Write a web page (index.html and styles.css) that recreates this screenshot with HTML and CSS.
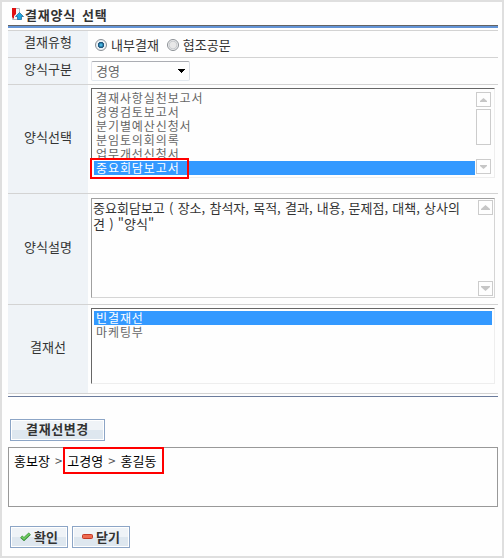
FILE: index.html
```html
<!DOCTYPE html>
<html lang="ko">
<head>
    <meta charset="utf-8">
    <title>결재양식 선택</title>
    <link rel="stylesheet" href="styles.css">
</head>
<body>
    <div class="popup">
        <h1 class="title">
            <svg class="title-icon" width="13" height="13" viewBox="0 0 13 13">
                <path d="M1.5 .5h7v11h-7z" fill="#f4f5f7" stroke="#b4b8be" stroke-width="1"/>
                <path d="M1 0h4v6L3 8v3L1 9z" fill="#e01010"/>
                <path d="M8.5 4.5l4 4h-2v3h-4v-3h-2z" fill="#1fa6dc" stroke="#12639a" stroke-width=".7"/>
            </svg>
            <span class="title-text">결재양식 선택</span>
        </h1>

        <div class="form">
            <div class="row row-type">
                <div class="label">결재유형</div>
                <div class="field radios">
                    <span class="radio checked"></span><span class="radio-text first">내부결재</span>
                    <span class="radio"></span><span class="radio-text">협조공문</span>
                </div>
            </div>
            <div class="row row-group">
                <div class="label">양식구분</div>
                <div class="field">
                    <div class="select">
                        <span>경영</span>
                        <svg width="8" height="4" viewBox="0 0 8 4" shape-rendering="crispEdges"><path d="M0 0h8L4 4z" fill="#000"/></svg>
                    </div>
                </div>
            </div>
            <div class="row row-list">
                <div class="label">양식선택</div>
                <div class="field">
                    <div class="listbox forms">
                        <ul class="options">
                            <li>결재사항실천보고서</li>
                            <li>경영검토보고서</li>
                            <li>분기별예산신청서</li>
                            <li>분임토의회의록</li>
                            <li>업무개선신청서</li>
                            <li class="selected">중요회담보고서</li>
                        </ul>
                        <div class="scroll">
                            <span class="scroll-btn"><svg width="7" height="4" viewBox="0 0 7 4"><path d="M0 4V3L3.5 0L7 3V4z" fill="#c6c6c6"/></svg></span>
                            <span class="thumb"></span>
                            <span class="scroll-btn down"><svg width="7" height="4" viewBox="0 0 7 4"><path d="M0 0V1L3.5 4L7 1V0z" fill="#c6c6c6"/></svg></span>
                        </div>
                        <div class="mark mark-form"></div>
                    </div>
                </div>
            </div>
            <div class="row row-desc">
                <div class="label">양식설명</div>
                <div class="field">
                    <div class="textarea">
                        <p>중요회담보고 ( 장소, 참석자, 목적, 결과, 내용, 문제점, 대책, 상사의<br>견 ) "양식"</p>
                        <div class="scroll">
                            <span class="scroll-btn"><svg width="9" height="5" viewBox="0 0 9 5"><path d="M0 5V4L4.500 0L9 4V5z" fill="#c6c6c6"/></svg></span>
                            <span class="scroll-btn down"><svg width="9" height="5" viewBox="0 0 9 5"><path d="M0 0V1L4.500 5L9 1V0z" fill="#c6c6c6"/></svg></span>
                        </div>
                    </div>
                </div>
            </div>
            <div class="row row-line">
                <div class="label">결재선</div>
                <div class="field">
                    <div class="listbox lines">
                        <ul class="options">
                            <li class="selected">빈결재선</li>
                            <li>마케팅부</li>
                        </ul>
                    </div>
                </div>
            </div>
        </div>

        <button class="btn btn-change" type="button"><span>결재선변경</span></button>

        <div class="path">
            <span class="person">홍보장</span><span class="gt">&gt;</span><span class="person">고경영</span><span class="gt">&gt;</span><span class="person">홍길동</span>
            <div class="mark mark-path"></div>
        </div>

        <div class="buttons">
            <button class="btn" type="button">
                <svg width="11" height="9" viewBox="0 0 11 9"><path d="M1.200 4.600L4 7.200L9.800 1.600" fill="none" stroke="#2f8a2f" stroke-width="3"/><path d="M1.500 4.600L4 6.800L9.500 1.700" fill="none" stroke="#72cc65" stroke-width="1.600"/></svg>
                <span>확인</span>
            </button>
            <button class="btn" type="button">
                <svg width="11" height="9" viewBox="0 0 11 9"><rect x=".5" y="2.5" width="10" height="4" rx="1" fill="#ee6a50" stroke="#c23a26"/></svg>
                <span>닫기</span>
            </button>
        </div>
    </div>
</body>
</html>
```
FILE: styles.css
```css
*
{
    box-sizing: border-box;
}
body
{
    margin: 0;
    font-family: "Noto Sans CJK KR", sans-serif;
    font-size: 13px;
    line-height: 14px;
    color: #333;
}
.popup
{
    height: 558px;
    border: 2px solid #dfdfdf;
    padding: 0 4px 0 6px;
    background: #fefefe;
}
.title
{
    display: flex;
    align-items: center;
    height: 26px;
    margin: 0;
    padding: 1px 0 0 3px;
    border-bottom: 2px solid #6394d6;
    box-shadow: inset 0 -1px #636363;
    font-size: 13px;
    white-space: nowrap;
}
.title-icon
{
    margin-right: 1px;
}
.title-text
{
    letter-spacing: 0.8px;
    word-spacing: 1.5px;
}
.form
{
    margin-top: 2px;
    border-bottom: 1px solid #6b7b9c;
    padding-bottom: 2px;
}
.row
{
    display: flex;
    border-top: 1px solid #d3d3d3;
}
.row-type,
.row-group
{
    height: 27px;
}
.row-list
{
    height: 109px;
}
.row-desc
{
    height: 111px;
}
.row-line
{
    height: 90px;
    border-bottom: 1px solid #d3d3d3;
}
.label
{
    display: flex;
    align-items: center;
    justify-content: center;
    width: 80px;
    padding-bottom: 5px;
    background: #eff3f7;
}
.field
{
    flex: 1;
    padding: 3px;
}
.radios
{
    display: flex;
    align-items: center;
    padding: 1px 0 0 7px;
}
.radio
{
    width: 12px;
    height: 12px;
    border: 1px solid #8a8f94;
    border-radius: 50%;
    background: radial-gradient(circle, #e8e8e8 40%, #c6c9cc 55%, #fff 70%);
}
.radio.checked
{
    background: radial-gradient(circle, #46b4e0 0 10%, #134a74 40%, #e8f0f5 50%);
}
.radio-text
{
    margin-left: 4px;
}
.radio-text.first
{
    margin-right: 8px;
}
.select
{
    display: flex;
    align-items: center;
    justify-content: space-between;
    width: 99px;
    height: 20px;
    border: 1px solid #abadb3;
    border-color: #abadb3 #dbdfe6 #e3e9ef #e2e3ea;
    border-radius: 2px;
    padding: 0 4px;
    color: #666;
}
.listbox,
.textarea
{
    position: relative;
    display: flex;
    width: 404px;
    border: 1px solid #666;
    border-color: #666 #eee #eee #666;
}
.forms
{
    height: 90px;
}
.lines
{
    height: 76px;
}
.options
{
    flex: 1;
    list-style: none;
    margin: 0;
    padding: 2px;
    font-size: 12px;
    letter-spacing: 0.9px;
    color: #666;
}
.forms .options
{
    padding-right: 1px;
}
.options li
{
    height: 14px;
    padding-left: 2px;
}
.options .selected
{
    background: #3399ff;
    color: #fff;
}
.scroll
{
    display: flex;
    flex-direction: column;
    width: 15px;
    margin: 1px;
}
.forms .scroll
{
    margin: 3px 3px 3px 0;
}
.scroll-btn
{
    display: flex;
    align-items: center;
    justify-content: center;
    height: 15px;
    border: 1px solid #ccc;
}
.scroll-btn.down
{
    margin-top: auto;
}
.thumb
{
    height: 36px;
    margin-top: 2px;
    border: 1px solid #ccc;
}
.row-desc .field
{
    padding-top: 4px;
}
.textarea
{
    height: 100px;
    border-color: #a0a0a0 #d5d5d5 #d5d5d5 #a0a0a0;
}
.textarea p
{
    flex: 1;
    margin: 0;
    padding: 1px 0 0 1px;
    line-height: 16px;
    word-spacing: 0.6px;
    white-space: nowrap;
}
.btn
{
    display: flex;
    align-items: center;
    justify-content: center;
    width: 58px;
    height: 22px;
    padding: 0 0 1px;
    border: 1px solid #8ca5c6;
    background: linear-gradient(#eff3f7 50%, #dee7ef 50%);
    box-shadow: inset 0 0 0 1px #fff;
    font-family: inherit;
    font-size: 13px;
    font-weight: bold;
    line-height: 14px;
    color: #333;
}
.btn svg
{
    margin-right: 3px;
}
.btn-change
{
    width: 95px;
    margin: 22px 0 6px 2px;
    letter-spacing: 0.6px;
    padding-bottom: 3px;
}
.path
{
    position: relative;
    display: flex;
    height: 60px;
    border: 1px solid #999;
    padding: 6px 5px;
    color: #000;
}
.gt
{
    width: 17.4px;
    text-align: center;
    color: #555;
}
.buttons
{
    display: flex;
    gap: 4px;
    margin: 19px 0 0 2px;
}
/* red guide boxes over the chosen items */
.mark
{
    position: absolute;
    border: 2px solid #f00;
}
.mark-form
{
    left: -2px;
    top: 69px;
    width: 99px;
    height: 21px;
}
.mark-path
{
    left: 54px;
    top: -1px;
    width: 101px;
    height: 27px;
}
```
